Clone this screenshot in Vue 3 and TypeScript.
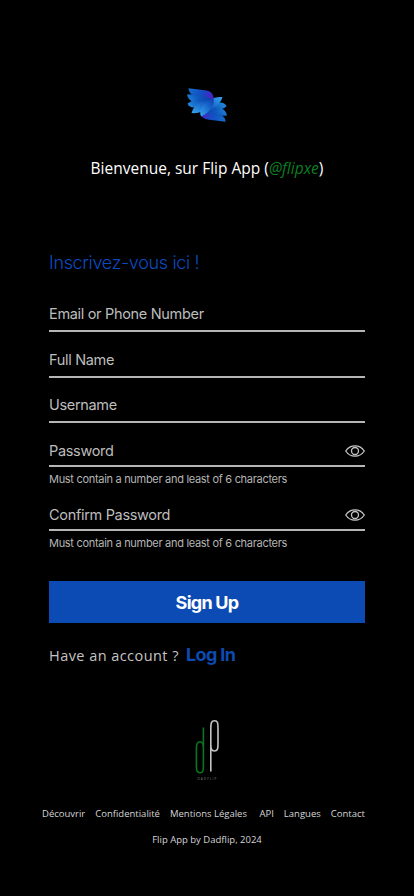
<script setup lang="ts">
import { ref } from 'vue'

interface Field {
  name: string
  label: string
  secret: boolean
}

const fields: Field[] = [
  { name: 'contact', label: 'Email or Phone Number', secret: false },
  { name: 'full', label: 'Full Name', secret: false },
  { name: 'user', label: 'Username', secret: false },
  { name: 'pass', label: 'Password', secret: true },
  { name: 'confirm', label: 'Confirm Password', secret: true },
]

const links: string[] = ['Découvrir', 'Confidentialité', 'Mentions Légales', 'API', 'Langues', 'Contact']
const values = ref<Record<string, string>>({})
const shown = ref<Record<string, boolean>>({})
</script>

<template>
  <main class="page">
    <svg class="logo" viewBox="0 0 42 36">
      <defs>
        <linearGradient id="wing" x1="0" y1="0" x2="1" y2="0.4">
          <stop offset="0" stop-color="#1470cc" />
          <stop offset="0.55" stop-color="#124fc4" />
          <stop offset="1" stop-color="#4a22c4" />
        </linearGradient>
        <linearGradient id="feather" x1="0" y1="0.6" x2="1" y2="0.2">
          <stop offset="0" stop-color="#2187da" />
          <stop offset="0.5" stop-color="#1059be" />
          <stop offset="1" stop-color="#0a3fae" />
        </linearGradient>
        <linearGradient id="leaf" x1="0" y1="1" x2="1" y2="0">
          <stop offset="0" stop-color="#35a6f0" />
          <stop offset="0.6" stop-color="#1864c8" />
          <stop offset="1" stop-color="#0a3fae" />
        </linearGradient>
        <g id="half">
          <path d="M2.5 1.3 L19 3.2 Q27 4.2 27.5 10 V16 L20 14 L7 8 Q2.5 6 2.5 1.3Z" fill="url(#wing)" />
          <path d="M1 7.5 Q12 6 26 12 L22 19 L7 14.5 Q2 13 1 7.5Z" fill="url(#feather)" />
          <path d="M1.5 16.5 Q12 9 26 12 L20 20 L8 20.5 Q3 20.5 1.5 16.5Z" fill="url(#feather)" />
          <path d="M5.5 26 Q9 14 26 12 L23 20 Q16 27 5.5 26Z" fill="url(#leaf)" />
        </g>
      </defs>
      <use href="#half" transform="rotate(180 21 18)" />
      <use href="#half" />
      <path d="M15 29.5 Q11 19 27 11.5 Q30 22 15 29.5Z" fill="url(#leaf)" />
    </svg>
    <p class="welcome">Bienvenue, sur Flip App (<em>@flipxe</em>)</p>

    <form class="form" @submit.prevent>
      <h1 class="title">Inscrivez-vous ici !</h1>
      <div v-for="f in fields" :key="f.name" class="field" :class="[f.name, { secret: f.secret }]">
        <div class="line">
          <input
            v-model="values[f.name]"
            :type="f.secret && !shown[f.name] ? 'password' : 'text'"
            :placeholder="f.label"
            :aria-label="f.label"
          />
          <svg v-if="f.secret" class="eye" viewBox="0 0 20 12" @click="shown[f.name] = !shown[f.name]">
            <path d="M.7 6C3 2.5 6 .8 10 .8S17 2.5 19.3 6C17 9.5 14 11.2 10 11.2S3 9.5.7 6Z" />
            <circle cx="10" cy="6" r="3.5" />
          </svg>
        </div>
        <p v-if="f.secret" class="hint">Must contain a number and least of 6 characters</p>
      </div>
      <button class="submit" type="submit"><span>Sign Up</span></button>
      <p class="login"><span class="ask">Have an account ?</span><a class="enter">Log In</a></p>
    </form>

    <footer class="footer">
      <svg class="brand" viewBox="0 0 26 62">
        <path d="M9.4 28C9.4 23.5 8.6 21.8 6 21.8C3 21.8 2.4 24 2.4 28V46C2.4 51 3 52.7 6 52.7C9 52.7 9.4 51 9.4 46V7.5" stroke="#0b7422" />
        <path d="M16.8 51.5V9C16.8 3 17.2 .8 20.6 .8C23.7 .8 24 3 24 8V24C24 29 23.5 31 20.4 31C17.4 31 16.8 29 16.8 24" stroke="#c4c4c4" />
        <text x="3.6" y="59.7">DADFLIP</text>
      </svg>
      <nav class="links"><a v-for="l in links" :key="l">{{ l }}</a></nav>
      <p class="copy">Flip App by Dadflip, 2024</p>
    </footer>
  </main>
</template>

<style>
body {
  background: #000;
}
</style>

<style scoped>
.page {
  box-sizing: border-box;
  width: 414px;
  height: 896px;
  padding-top: 87px;
  background: #000;
  color: #c4c4c4;
  font-family: 'Open Sans', 'Noto Sans', sans-serif;
  overflow: hidden;
}
p, h1 {
  margin: 0;
}
.logo {
  display: block;
  width: 42px;
  height: 36px;
  margin: 0 auto;
}
.welcome {
  margin-top: 35px;
  font-size: 15.5px;
  line-height: 21px;
  color: #fff;
  text-align: center;
  white-space: nowrap;
}
.welcome em {
  color: #0b7f22;
}
.form {
  width: 316px;
  margin: 72px 0 0 49px;
  font-family: Inter, 'Open Sans', sans-serif;
}
.title {
  margin-bottom: 24px;
  font-size: 18px;
  font-weight: 300;
  line-height: 24px;
  letter-spacing: -0.34px;
  color: #0b4bc0;
  white-space: nowrap;
}
.field {
  height: 45.5px;
}
.field.user {
  height: 45px;
}
.field.secret {
  height: 64px;
}
.line {
  box-sizing: border-box;
  display: flex;
  align-items: center;
  height: 33px;
  padding-bottom: 1px;
  border-bottom: 2px solid #b5b5b5;
}
.secret .line {
  height: 32px;
  padding: 1px 0 0;
}
.line input {
  flex: 1;
  min-width: 0;
  padding: 0;
  border: 0;
  outline: 0;
  background: none;
  color: #bdbdbd;
  font: 400 14.5px/20px Inter, 'Open Sans', sans-serif;
  letter-spacing: -0.32px;
}
.line input::placeholder {
  color: #bdbdbd;
  opacity: 1;
}
.eye {
  width: 20px;
  height: 12px;
  fill: none;
  stroke: #c4c4c4;
  stroke-width: 1.3;
}
.hint {
  padding-top: 4px;
  font-size: 11px;
  font-weight: 400;
  line-height: 16px;
  letter-spacing: -0.3px;
  color: #b5b5b5;
  white-space: nowrap;
}
.submit {
  display: block;
  width: 316px;
  height: 42px;
  margin-top: 18px;
  padding: 2px 0 0;
  border: 0;
  background: #0b4bb3;
  color: #fff;
  font: 700 18px/24px Inter, 'Open Sans', sans-serif;
  letter-spacing: -0.75px;
}
.login {
  display: flex;
  align-items: flex-start;
  gap: 7px;
  margin-top: 20px;
  height: 24px;
  white-space: nowrap;
}
.ask {
  padding-top: 1px;
  font: 400 14.5px/24px 'Open Sans', sans-serif;
  letter-spacing: 0.45px;
}
.enter {
  color: #0b4bb3;
  font-size: 18px;
  font-weight: 700;
  line-height: 24px;
  letter-spacing: -0.6px;
}
.footer {
  margin-top: 53px;
}
.brand {
  display: block;
  width: 26px;
  height: 62px;
  margin-left: 194px;
  fill: none;
  stroke-width: 1.6;
}
.brand text {
  fill: #888;
  font: 3px 'Open Sans', sans-serif;
  letter-spacing: 1.1px;
}
.links {
  display: flex;
  gap: 10px;
  margin: 25px 0 0 42px;
  font-size: 9.5px;
  line-height: 14px;
  white-space: nowrap;
  color: #d5d5d5;
}
.links a:nth-child(4) {
  margin-left: 2.5px;
}
.copy {
  margin-top: 12px;
  font-size: 9.5px;
  line-height: 14px;
  text-align: center;
  color: #d5d5d5;
}
</style>
